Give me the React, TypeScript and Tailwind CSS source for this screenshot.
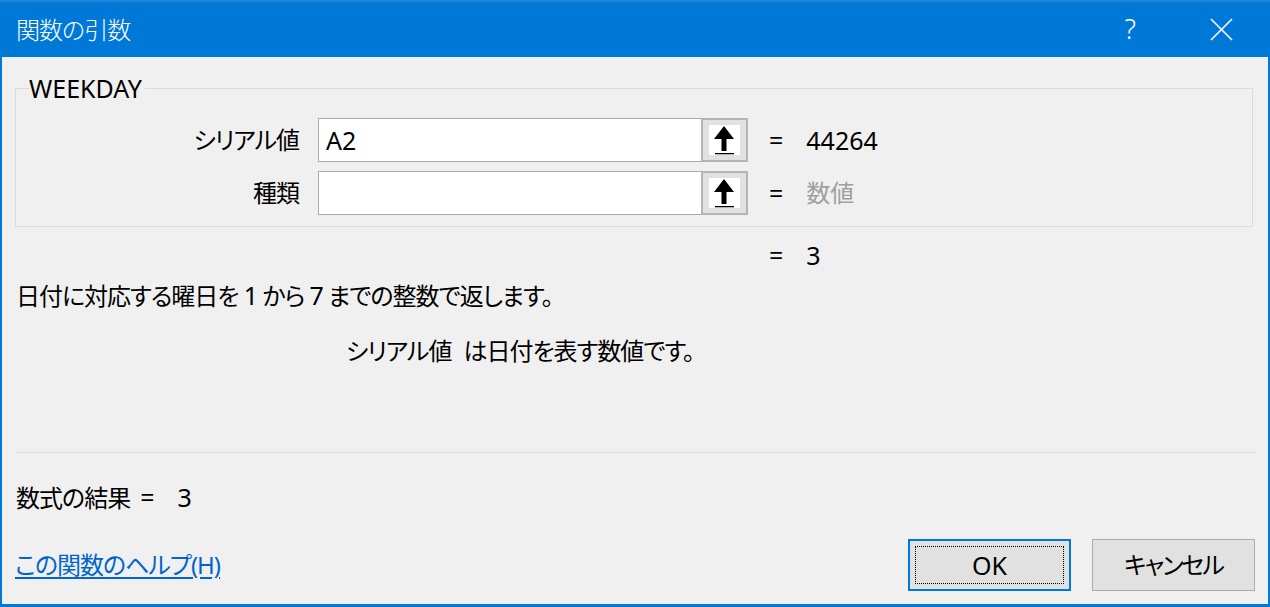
import React from "react"

function RefIcon() {
  return (
    <svg width="31" height="30" viewBox="0 0 31 30" className="bg-white">
      <polygon points="15,1 5,14 25,14" fill="#000" />
      <rect x="12.5" y="13" width="5" height="13" fill="#000" />
      <rect x="6" y="28" width="19" height="1.3" fill="#000" />
    </svg>
  )
}

type ArgRowProps = {
  label: string
  value: string
  result: string
  placeholder?: boolean
}

function ArgRow(props: ArgRowProps) {
  return (
    <div className="flex h-[44px] items-center">
      <div className="w-[283px] text-right tracking-[-1px]">{props.label}</div>
      <div className="ml-[19px] flex h-[44px] w-[383px] items-center border border-r-0 border-[#ababab] bg-white pl-[7px] text-[25px]">
        {props.value}
      </div>
      <div className="flex h-[44px] w-[47px] items-center justify-center border-2 border-[#b4b4b4] bg-[#e1e1e1]">
        <RefIcon />
      </div>
      <span className="ml-[21px] text-[25px]">=</span>
      <span
        className={
          props.placeholder ? "ml-[23px] text-[#a0a0a0]" : "ml-[23px] text-[25px]"
        }
      >
        {props.result}
      </span>
    </div>
  )
}

export default function App() {
  return (
    <div className="flex h-[607px] w-[1270px] flex-col bg-[#0078d7] font-['Noto_Sans','Noto_Sans_CJK_JP',sans-serif] text-[24px] text-black [font-feature-settings:'palt']">
      {/* title bar */}
      <div className="flex h-[57px] shrink-0 items-center border-t-2 border-[#1a86d9] pl-[16px] text-white">
        <span className="font-light tracking-[-1px]">関数の引数</span>
        <span className="ml-auto mr-[74px] text-[27px] font-light">?</span>
        <svg width="23" height="23" viewBox="0 0 23 23" className="mr-[37px]">
          <path d="M1 1 L22 22 M22 1 L1 22" stroke="#fff" strokeWidth="1.6" />
        </svg>
      </div>

      {/* body */}
      <div className="mx-[2px] mb-[3px] flex flex-1 flex-col bg-[#f0f0f0] px-[13px] leading-[32px]">
        <fieldset className="mt-[15px] mr-[2px] border border-[#dcdcdc] px-0 pt-[14px] pb-[11px]">
          <legend className="ml-[13px] px-0 pr-[3px] text-[25px]">WEEKDAY</legend>
          <div className="flex flex-col gap-[9px]">
            <ArgRow label="シリアル値" value="A2" result="44264" />
            <ArgRow label="種類" value="" result="数値" placeholder />
          </div>
        </fieldset>

        <div className="mt-[12px] pl-[754px] text-[25px]">
          <span>=</span>
          <span className="ml-[23px]">3</span>
        </div>

        <div className="mt-[8px] pl-[1px] tracking-[-1px]">
          日付に対応する曜日を <span className="text-[25px]">1</span> から{" "}
          <span className="text-[25px]">7</span> までの整数で返します。
        </div>

        <div className="mt-[23px] pl-[331px] tracking-[-1px]">
          <span>シリアル値</span>
          <span className="ml-[12px]">は日付を表す数値です。</span>
        </div>

        <div className="mt-[85px] h-px bg-[#dadada]" />

        <div className="mt-[28px] pl-[1px]">
          <span className="tracking-[-1px]">数式の結果</span>
          <span className="ml-[10px] text-[25px]">=</span>
          <span className="ml-[23px] text-[25px]">3</span>
        </div>

        <div className="mt-[25px] flex items-center">
          <a className="text-[#0066cc] tracking-[-1px] underline underline-offset-[3px]">
            この関数のヘルプ(H)
          </a>
          <div className="ml-auto flex gap-[21px]">
            <div className="flex h-[52px] w-[163px] border-2 border-[#0078d7] bg-[#e1e1e1] p-[5px] text-[25px]">
              <div className="flex flex-1 items-center justify-center border border-dotted border-black">
                OK
              </div>
            </div>
            <div className="flex h-[52px] w-[163px] items-center justify-center border border-[#adadad] bg-[#e1e1e1] tracking-[-2px]">
              キャンセル
            </div>
          </div>
        </div>
      </div>
    </div>
  )
}
